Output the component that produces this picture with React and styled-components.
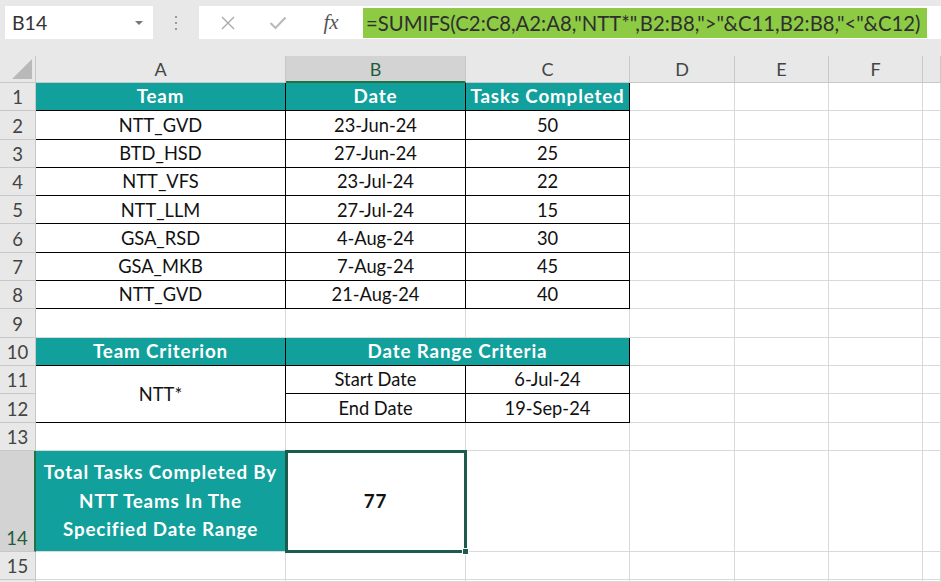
import React from "react";
import styled, { createGlobalStyle } from "styled-components";

const TEAL = "#11a09b";
const GRID = "#d9d9d9";
const SEL = "#1d5b4f";
const XL_GREEN = "#217346";

const GlobalStyle = createGlobalStyle`
  html, body {
    margin: 0;
    padding: 0;
    background: #e8e8e8;
  }
  body {
    font-family: Lato, "Liberation Sans", sans-serif;
  }
`;

const Sheet = styled.div`
  width: 941px;
  height: 582px;
  overflow: hidden;
  background: #e8e8e8;
  display: flex;
  flex-direction: column;
`;

const Toolbar = styled.div`
  height: 56px;
  flex-shrink: 0;
  box-sizing: border-box;
  padding: 6px 0 0 5px;
  display: flex;
  align-items: flex-start;
`;

const NameBox = styled.div`
  width: 148px;
  height: 33px;
  background: #fff;
  display: flex;
  align-items: center;
  justify-content: space-between;
  padding: 0 8px 0 7px;
  box-sizing: border-box;
  font-size: 19.5px;
  color: #333;
`;

const Caret = styled.span`
  width: 0;
  height: 0;
  border-left: 4px solid transparent;
  border-right: 4px solid transparent;
  border-top: 4px solid #777;
  margin-right: 2px;
`;

const Grip = styled.div`
  width: 46px;
  height: 33px;
  display: flex;
  flex-direction: column;
  align-items: center;
  justify-content: center;
  gap: 4px;
`;

const Dot = styled.span`
  width: 2px;
  height: 2px;
  background: #9a9a9a;
`;

const FormulaBox = styled.div`
  flex: 1;
  height: 33px;
  background: #fff;
  display: flex;
  align-items: center;
`;

const Tools = styled.div`
  width: 164px;
  display: flex;
  align-items: center;
  padding-left: 4px;
  box-sizing: border-box;
`;

const ToolIcon = styled.span`
  width: 50px;
  display: flex;
  align-items: center;
  justify-content: center;
`;

const Fx = styled.span`
  font-family: "Liberation Serif", "DejaVu Serif", serif;
  font-style: italic;
  font-size: 21px;
  color: #555;
  margin-left: 6px;
`;

const Formula = styled.div`
  width: 564px;
  height: 30px;
  background: #8dcb45;
  display: flex;
  align-items: center;
  padding-left: 3px;
  box-sizing: border-box;
  font-size: 20.3px;
  color: #2f2f2f;
  white-space: nowrap;
  overflow: hidden;
`;

const Grid = styled.div`
  flex: 1;
  min-height: 0;
  overflow: hidden;
  display: grid;
  grid-template-columns: 36px 250px 180px 164px 105px 94px 94px 1fr;
  grid-template-rows: 27px repeat(13, 28.3px) 101px 28.3px minmax(0, 1fr);
  background: #fff;
  font-size: 18.3px;
`;

const Corner = styled.div`
  background: #e8e8e8;
  border-right: 1px solid #c8c8c8;
  border-bottom: 1px solid #c8c8c8;
  box-sizing: border-box;
  display: flex;
  align-items: flex-end;
  justify-content: flex-end;
  padding: 0 3px 3px 0;
`;

const Triangle = styled.span`
  width: 20px;
  height: 20px;
  background: #b9b9b9;
  clip-path: polygon(100% 0, 100% 100%, 0 100%);
`;

const ColHead = styled.div`
  box-sizing: border-box;
  display: flex;
  align-items: center;
  justify-content: center;
  background: ${(p) => (p.$sel ? "#d3d3d3" : "#e8e8e8")};
  color: ${(p) => (p.$sel ? "#1e5e3a" : "#444")};
  border-right: 1px solid #c8c8c8;
  border-bottom: ${(p) => (p.$sel ? `2px solid ${XL_GREEN}` : "1px solid #c8c8c8")};
  font-size: 18px;
`;

const RowHead = styled.div`
  box-sizing: border-box;
  display: flex;
  align-items: flex-end;
  justify-content: center;
  padding-bottom: 2px;
  overflow: hidden;
  background: ${(p) => (p.$sel ? "#d3d3d3" : "#e8e8e8")};
  color: ${(p) => (p.$sel ? "#1e5e3a" : "#444")};
  border-right: ${(p) => (p.$sel ? `2px solid ${XL_GREEN}` : "1px solid #c8c8c8")};
  border-bottom: 1px solid #c8c8c8;
  font-size: 18.5px;
`;

const Cell = styled.div`
  box-sizing: border-box;
  display: flex;
  align-items: center;
  justify-content: center;
  text-align: center;
  white-space: nowrap;
  grid-column: span ${(p) => p.$span || 1};
  grid-row: span ${(p) => p.$rows || 1};
  background: ${(p) => (p.$fill ? TEAL : "#fff")};
  color: ${(p) => (p.$fill ? "#fff" : "#111")};
  font-weight: ${(p) => (p.$bold ? 700 : 400)};
  font-size: ${(p) => (p.$bold ? "18.8px" : "inherit")};
  letter-spacing: ${(p) => (p.$bold ? "0.85px" : "0")};
  line-height: 28.5px;
  border-right: 1px solid ${(p) => (p.$edge ? "#000" : GRID)};
  border-bottom: 1px solid ${(p) => (p.$edge ? "#000" : GRID)};
  position: ${(p) => (p.$selected ? "relative" : "static")};
  z-index: ${(p) => (p.$selected ? 1 : "auto")};
  outline: ${(p) => (p.$selected ? `3px solid ${SEL}` : "none")};
  outline-offset: -2px;

  ${(p) =>
    p.$selected &&
    `
    &::after {
      content: "";
      position: absolute;
      right: -4px;
      bottom: -4px;
      width: 5px;
      height: 5px;
      background: ${SEL};
      border: 1px solid #fff;
    }
  `}
`;

const blanks = (n) => Array.from({ length: n }, () => ({}));

const head = { $fill: true, $bold: true, $edge: true };
const boxed = { $edge: true };

const teams = [
  ["NTT_GVD", "23-Jun-24", "50"],
  ["BTD_HSD", "27-Jun-24", "25"],
  ["NTT_VFS", "23-Jul-24", "22"],
  ["NTT_LLM", "27-Jul-24", "15"],
  ["GSA_RSD", "4-Aug-24", "30"],
  ["GSA_MKB", "7-Aug-24", "45"],
  ["NTT_GVD", "21-Aug-24", "40"],
];

const rows = [
  [
    { t: "Team", ...head },
    { t: "Date", ...head },
    { t: "Tasks Completed", ...head },
    ...blanks(4),
  ],
  ...teams.map((r) => [...r.map((t) => ({ t, ...boxed })), ...blanks(4)]),
  blanks(7),
  [
    { t: "Team Criterion", ...head },
    { t: "Date Range Criteria", $span: 2, ...head },
    ...blanks(4),
  ],
  [
    { t: "NTT*", $rows: 2, ...boxed },
    { t: "Start Date", ...boxed },
    { t: "6-Jul-24", ...boxed },
    ...blanks(4),
  ],
  [{ t: "End Date", ...boxed }, { t: "19-Sep-24", ...boxed }, ...blanks(4)],
  blanks(7),
  [
    {
      t: ["Total Tasks Completed By", "NTT Teams In The", "Specified Date Range"],
      $fill: true,
      $bold: true,
    },
    { t: "77", $bold: true, $selected: true },
    ...blanks(5),
  ],
  blanks(7),
  blanks(7),
];

const cols = ["A", "B", "C", "D", "E", "F", ""];

function CellText({ t }) {
  if (Array.isArray(t)) {
    return (
      <span>
        {t.map((line, i) => (
          <React.Fragment key={i}>
            {i > 0 && <br />}
            {line}
          </React.Fragment>
        ))}
      </span>
    );
  }
  return t || null;
}

function App() {
  return (
    <Sheet>
      <GlobalStyle />
      <Toolbar>
        <NameBox>
          B14
          <Caret />
        </NameBox>
        <Grip>
          <Dot />
          <Dot />
          <Dot />
        </Grip>
        <FormulaBox>
          <Tools>
            <ToolIcon>
              <svg width="16" height="16" viewBox="0 0 16 16">
                <path d="M2 2 L14 14 M14 2 L2 14" stroke="#aaa" strokeWidth="1.4" fill="none" />
              </svg>
            </ToolIcon>
            <ToolIcon>
              <svg width="18" height="14" viewBox="0 0 18 14">
                <path d="M1.5 7 L6.5 12 L16.5 1.5" stroke="#bbb" strokeWidth="2.2" fill="none" />
              </svg>
            </ToolIcon>
            <ToolIcon>
              <Fx>fx</Fx>
            </ToolIcon>
          </Tools>
          <Formula>
            =SUMIFS(C2:C8,A2:A8,"NTT*",B2:B8,"&gt;"&amp;C11,B2:B8,"&lt;"&amp;C12)
          </Formula>
        </FormulaBox>
      </Toolbar>

      <Grid>
        <Corner>
          <Triangle />
        </Corner>
        {cols.map((c, i) => (
          <ColHead key={i} $sel={c === "B"}>
            {c}
          </ColHead>
        ))}
        {rows.map((row, r) => (
          <React.Fragment key={r}>
            <RowHead $sel={r + 1 === 14}>{r + 1 < 16 ? r + 1 : ""}</RowHead>
            {row.map(({ t, ...props }, c) => (
              <Cell key={c} {...props}>
                <CellText t={t} />
              </Cell>
            ))}
          </React.Fragment>
        ))}
      </Grid>
    </Sheet>
  );
}

export default App;
